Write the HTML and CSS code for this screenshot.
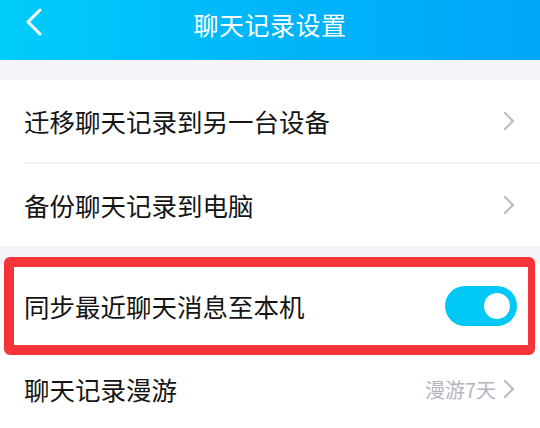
FILE: index.html
```html
<!DOCTYPE html>
<html lang="zh-CN">
<head>
<meta charset="utf-8">
<link rel="stylesheet" href="styles.css">
</head>
<body>
<div class="page">
  <header class="topbar">
    <svg class="back" width="18" height="28" viewBox="0 0 18 28"><path d="M15 2 L3 14 L15 26" fill="none" stroke="#fff" stroke-width="3" stroke-linecap="round" stroke-linejoin="round"/></svg>
    <h1 class="title">聊天记录设置</h1>
  </header>
  <div class="gap gap-top"></div>
  <section class="group">
    <div class="row">
      <span class="label">迁移聊天记录到另一台设备</span>
      <svg class="chev" width="12" height="20" viewBox="0 0 12 20"><path d="M2 2 L10 10 L2 18" fill="none" stroke="#b9bcc4" stroke-width="2.2" stroke-linecap="round" stroke-linejoin="round"/></svg>
    </div>
    <div class="divider"></div>
    <div class="row">
      <span class="label">备份聊天记录到电脑</span>
      <svg class="chev" width="12" height="20" viewBox="0 0 12 20"><path d="M2 2 L10 10 L2 18" fill="none" stroke="#b9bcc4" stroke-width="2.2" stroke-linecap="round" stroke-linejoin="round"/></svg>
    </div>
  </section>
  <div class="gap gap-mid"></div>
  <section class="group">
    <div class="row row-sync">
      <span class="label">同步最近聊天消息至本机</span>
      <span class="toggle"><span class="knob"></span></span>
      <div class="highlight"></div>
    </div>
    <div class="row">
      <span class="label">聊天记录漫游</span>
      <span class="value">漫游7天</span>
      <svg class="chev chev-value" width="12" height="20" viewBox="0 0 12 20"><path d="M2 2 L10 10 L2 18" fill="none" stroke="#b9bcc4" stroke-width="2.2" stroke-linecap="round" stroke-linejoin="round"/></svg>
    </div>
  </section>
</div>
</body>
</html>
```
FILE: styles.css
```css
html, body {
  margin: 0;
  padding: 0;
  background: #f4f5f8;
}
body {
  font-family: "Noto Sans CJK SC", "Noto Sans", sans-serif;
  width: 540px;
  height: 428px;
  overflow: hidden;
}
.page {
  display: flex;
  flex-direction: column;
}
.topbar {
  height: 60px;
  background: linear-gradient(90deg, #00cdfb 0%, #00b5f9 50%, #00a6f8 100%);
  position: relative;
  display: flex;
  justify-content: center;
}
.back {
  position: absolute;
  left: 25px;
  top: 8px;
}
.title {
  margin: 0;
  color: #fff;
  font-size: 25px;
  font-weight: 400;
  line-height: 48px;
  letter-spacing: 0.5px;
}
.gap-top { height: 20px; }
.gap-mid { height: 18px; }
.group {
  background: #fff;
  display: flex;
  flex-direction: column;
}
.row {
  height: 82px;
  display: flex;
  align-items: center;
  padding: 0 25px 0 24px;
  position: relative;
}
.row-sync {
  height: 84px;
}
.label {
  flex: 1;
  font-size: 25.5px;
  color: #141414;
  line-height: 1;
}
.divider {
  height: 2px;
  background: #f1f2f5;
  margin-left: 24px;
}
.chev { display: block; }
.value {
  font-size: 20px;
  color: #b3b6bf;
  margin-right: 7px;
}
.toggle {
  width: 72px;
  height: 40px;
  border-radius: 20px;
  background: #00c8f6;
  position: relative;
  margin-right: -2px;
}
.knob {
  position: absolute;
  right: 7px;
  top: 7px;
  width: 26px;
  height: 26px;
  border-radius: 50%;
  background: #fff;
}
.highlight {
  position: absolute;
  left: 4px;
  right: 5px;
  top: -7px;
  bottom: -7px;
  border: 10px solid #f5343a;
  border-right-width: 7px;
  border-radius: 6px;
  pointer-events: none;
}
```
